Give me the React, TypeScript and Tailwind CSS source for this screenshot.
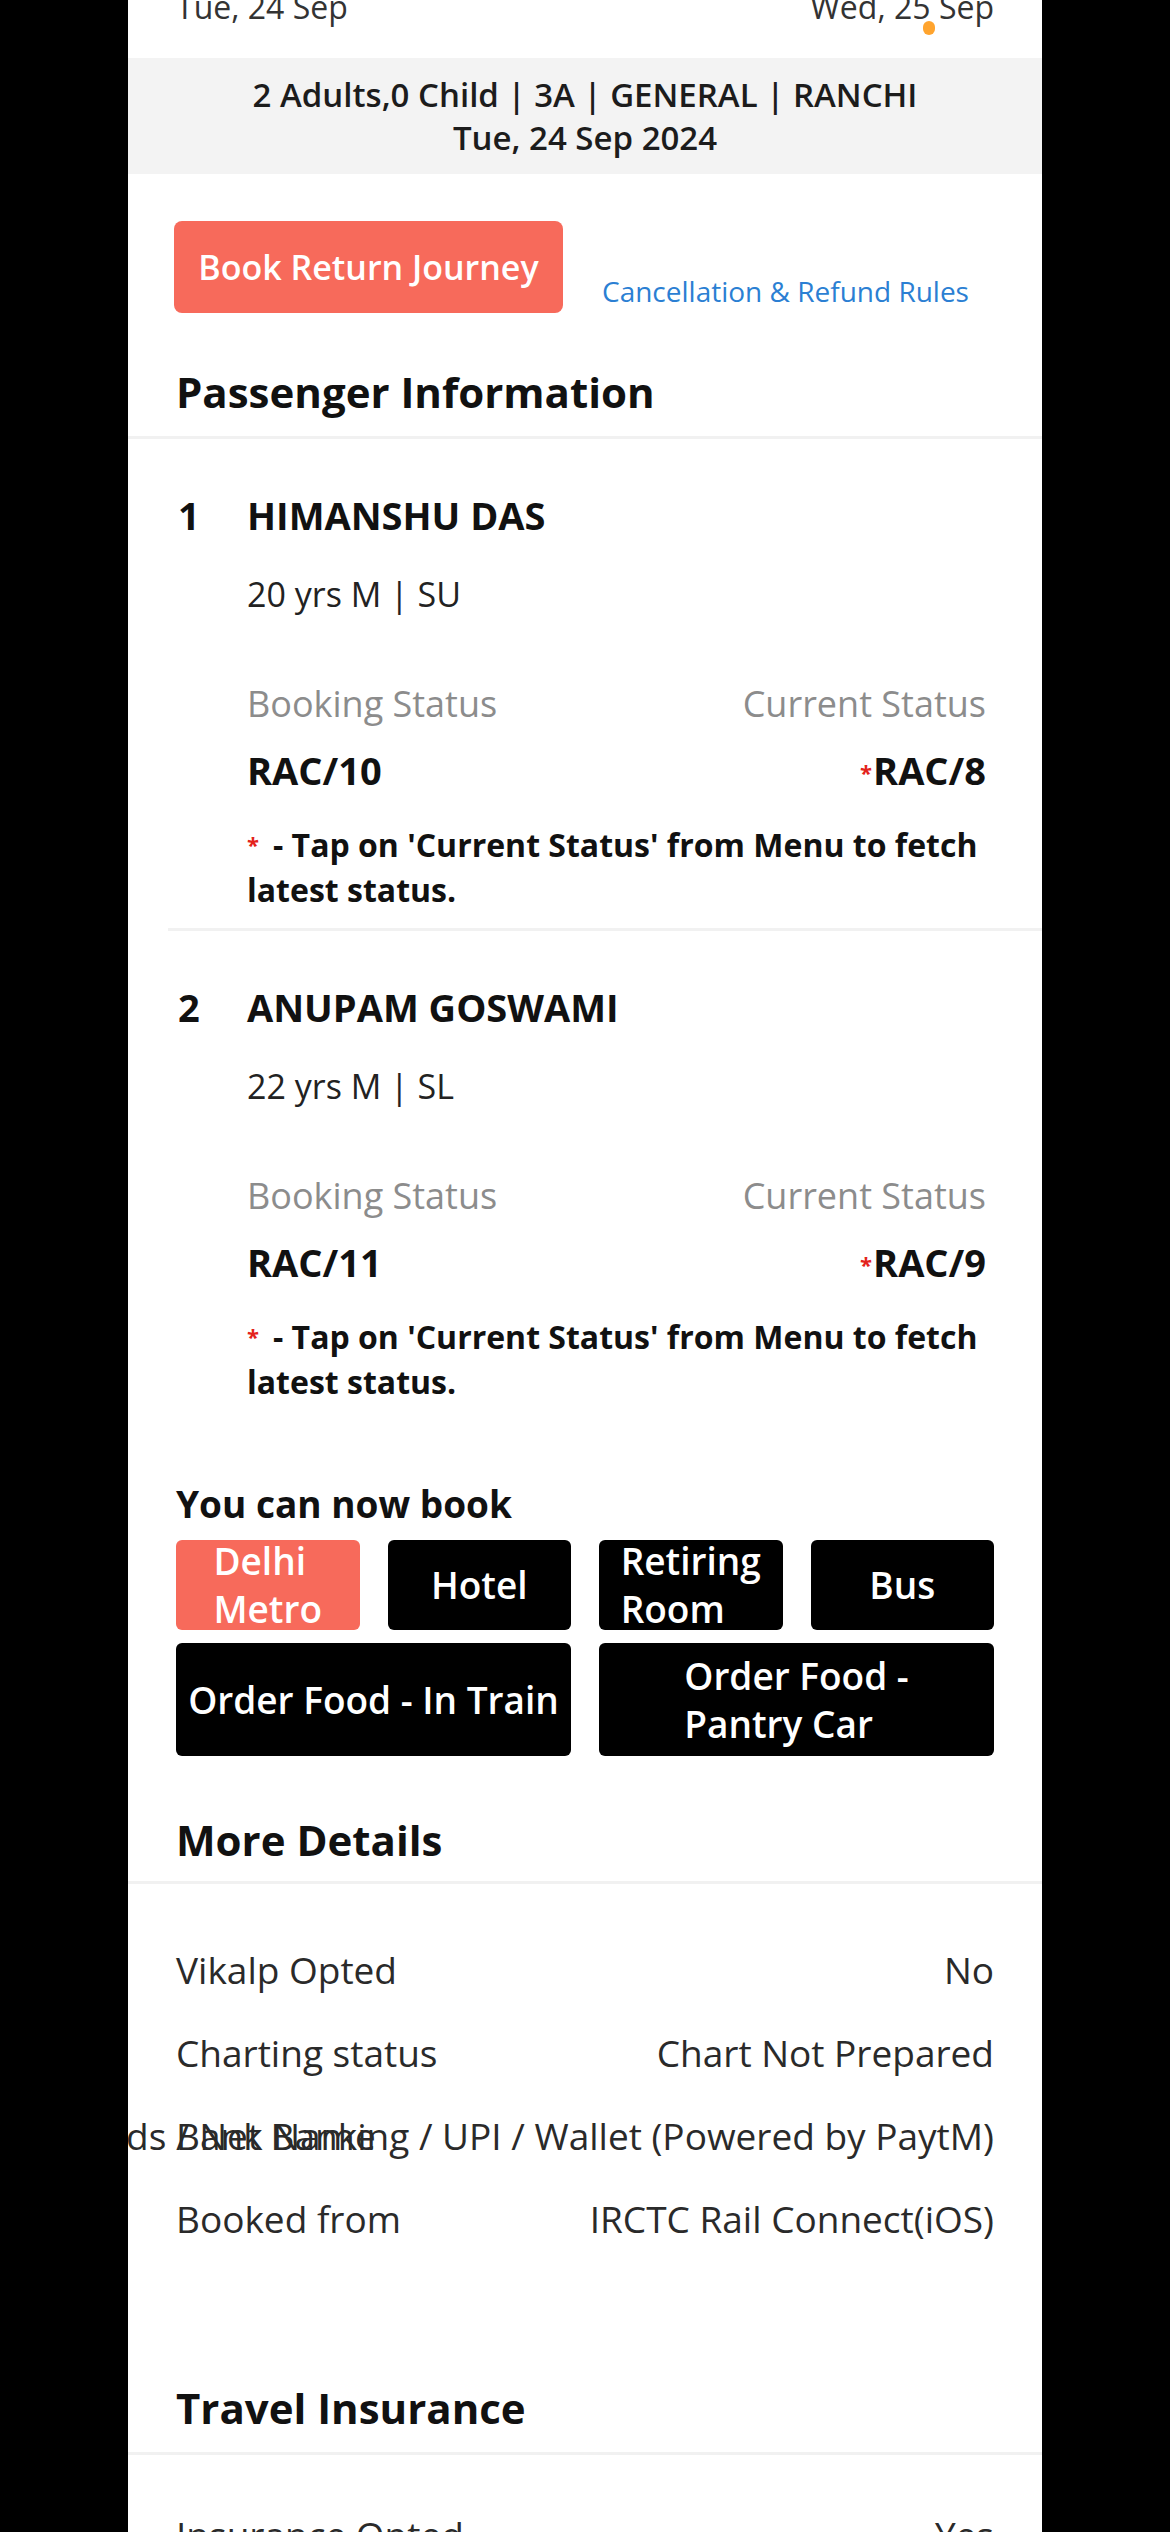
import React from 'react';

type Passenger = {
  no: number;
  name: string;
  info: string;
  booking: string;
  current: string;
};

const passengers: Passenger[] = [
  { no: 1, name: 'HIMANSHU DAS', info: '20 yrs M | SU', booking: 'RAC/10', current: 'RAC/8' },
  { no: 2, name: 'ANUPAM GOSWAMI', info: '22 yrs M | SL', booking: 'RAC/11', current: 'RAC/9' },
];

const Divider: React.FC<{ className?: string }> = ({ className = '' }) => (
  <div className={`h-[3px] bg-[#f1f1f1] ${className}`} />
);

const PassengerCard: React.FC<{ p: Passenger; last?: boolean }> = ({ p, last }) => (
  <div>
    <div className="px-12 pt-[51px]">
      <div className="flex text-[38px] leading-[50px] font-bold text-[#111]">
        <span className="w-[71px] pl-[2px]">{p.no}</span>
        <span>{p.name}</span>
      </div>
      <div className="pl-[71px] pr-[8px]">
        <div className="mt-[30px] text-[34px] leading-[48px] text-[#222]">{p.info}</div>
        <div className="mt-[62px] flex justify-between text-[36px] leading-[48px] text-[#8c8c8c]">
          <span>Booking Status</span>
          <span>Current Status</span>
        </div>
        <div className="mt-[17px] flex justify-between text-[38px] leading-[50px] font-bold text-[#111]">
          <span>{p.booking}</span>
          <span>
            <sup className="relative top-[-4px] mr-[1px] text-[22px] font-bold text-[#e3231b]">*</sup>
            {p.current}
          </span>
        </div>
        <p className="mt-[27px] -mr-[8px] text-[32px] leading-[45px] font-bold text-[#111]">
          <span className="block whitespace-nowrap">
            <sup className="relative top-[-4px] mr-[14px] text-[22px] text-[#e3231b]">*</sup>- Tap on 'Current Status' from Menu to fetch
          </span>
          <span className="block">latest status.</span>
        </p>
      </div>
    </div>
    {!last && <Divider className="mt-[16px] ml-[40px]" />}
  </div>
);

const bookItems = [
  { lines: ['Delhi', 'Metro'], color: 'bg-[#f76a5b]', span: 'col-span-1', h: 'h-[90px]' },
  { lines: ['Hotel'], color: 'bg-black', span: 'col-span-1', h: 'h-[90px]' },
  { lines: ['Retiring', 'Room'], color: 'bg-black', span: 'col-span-1', h: 'h-[90px]' },
  { lines: ['Bus'], color: 'bg-black', span: 'col-span-1', h: 'h-[90px]' },
  { lines: ['Order Food - In Train'], color: 'bg-black', span: 'col-span-2', h: 'h-[113px]' },
  { lines: ['Order Food -', 'Pantry Car'], color: 'bg-black', span: 'col-span-2', h: 'h-[113px]' },
];

const details = [
  { label: 'Vikalp Opted', value: 'No' },
  { label: 'Charting status', value: 'Chart Not Prepared' },
  { label: 'Bank Name', value: 'Credit Cards / Net Banking / UPI / Wallet (Powered by PaytM)' },
  { label: 'Booked from', value: 'IRCTC Rail Connect(iOS)' },
];

export default function App() {
  return (
    <div className="h-[2532px] overflow-hidden bg-black font-['Open_Sans',sans-serif]">
      <div className="relative mx-auto h-full w-[914px] overflow-hidden bg-white">
        {/* journey dates, cut off by the top edge */}
        <div className="-mt-[15px] flex justify-between px-12 text-[32px] leading-[44px] text-[#333]">
          <span>Tue, 24 Sep</span>
          <span>Wed, 25 Sep</span>
        </div>
        <span className="absolute left-[795px] top-[21px] h-[14px] w-[12px] rounded-full bg-[#ffa42e]" />

        {/* summary band */}
        <div className="mt-[29px] bg-[#f3f3f3] py-[15px] text-center text-[33px] leading-[43px] font-semibold text-[#1c1c1c]">
          <div>2 Adults,0 Child | 3A | GENERAL | RANCHI</div>
          <div>Tue, 24 Sep 2024</div>
        </div>

        {/* actions */}
        <div className="mt-[47px] flex items-end pl-[46px]">
          <button className="h-[92px] w-[389px] rounded-[8px] bg-[#f76a5b] text-[34px] font-semibold text-white">
            Book Return Journey
          </button>
          <a className="mb-[4px] ml-[39px] text-[28px] leading-[36px] text-[#2b7fd3]">Cancellation &amp; Refund Rules</a>
        </div>

        {/* passenger information */}
        <h2 className="mt-[51px] px-12 text-[42px] leading-[56px] font-bold text-[#111]">Passenger Information</h2>
        <Divider className="mt-[16px]" />
        {passengers.map((p, i) => (
          <PassengerCard key={p.no} p={p} last={i === passengers.length - 1} />
        ))}

        {/* you can now book */}
        <div className="mt-[76px] px-12">
          <h3 className="text-[37px] leading-[48px] font-bold text-[#111]">You can now book</h3>
          <div className="mt-[12px] grid grid-cols-4 gap-x-[28px] gap-y-[13px]">
            {bookItems.map((b) => (
              <div
                key={b.lines.join(' ')}
                className={`${b.color} ${b.span} ${b.h} flex items-center justify-center overflow-hidden rounded-[6px]`}
              >
                <span className="inline-block whitespace-nowrap text-left text-[37px] leading-[48px] font-semibold text-white">
                  {b.lines.map((l) => (
                    <span key={l} className="block">
                      {l}
                    </span>
                  ))}
                </span>
              </div>
            ))}
          </div>
        </div>

        {/* more details */}
        <h2 className="mt-[56px] px-12 text-[42px] leading-[56px] font-bold text-[#111]">More Details</h2>
        <Divider className="mt-[13px]" />
        <div className="mt-[62px] flex flex-col gap-[35px] px-12 text-[37px] leading-[48px] text-[#2a2a2a]">
          {details.map((d) => (
            <div key={d.label} className="grid grid-cols-[minmax(0,1fr)]">
              <span className="[grid-area:1/1] justify-self-start whitespace-nowrap">{d.label}</span>
              <span className="[grid-area:1/1] justify-self-end whitespace-nowrap">{d.value}</span>
            </div>
          ))}
        </div>

        {/* travel insurance */}
        <h2 className="mt-[137px] px-12 text-[42px] leading-[56px] font-bold text-[#111]">Travel Insurance</h2>
        <Divider className="mt-[16px]" />
        <div className="mt-[56px] flex justify-between px-12 text-[37px] leading-[48px] text-[#2a2a2a]">
          <span>Insurance Opted</span>
          <span>Yes</span>
        </div>
      </div>
    </div>
  );
}
